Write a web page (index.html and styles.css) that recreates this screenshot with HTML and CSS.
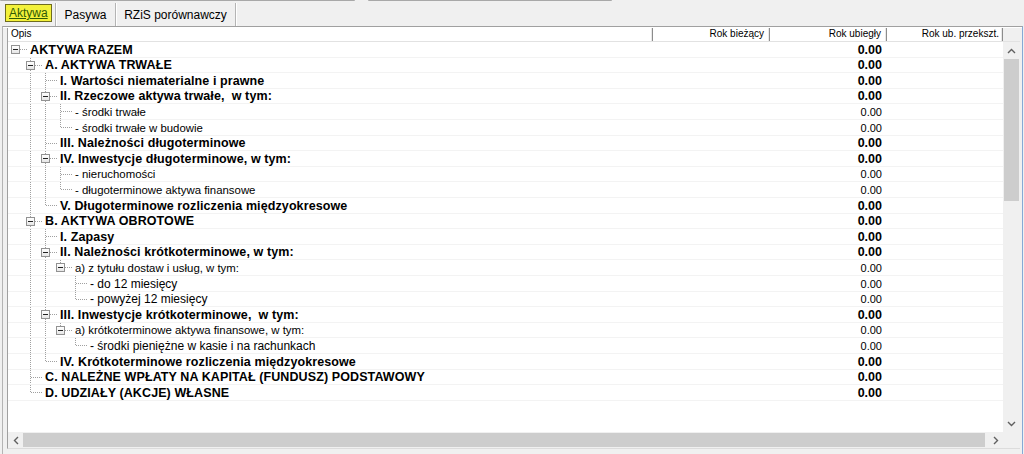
FILE: index.html
```html
<!DOCTYPE html>
<html lang="pl">
<head>
<meta charset="utf-8">
<title>Bilans</title>
<link rel="stylesheet" href="styles.css">
</head>
<body>
<div class="topline"><span class="seg s1"></span><span class="seg s2"></span></div>
<div class="tabs">
  <div class="tab tab1"><span class="hl">Aktywa</span></div>
  <div class="tab tab2">Pasywa</div>
  <div class="tab tab3">RZiS porównawczy</div>
</div>
<div class="frame">
  <div class="grid">
    <div class="head">
      <div class="h h0">Opis</div>
      <div class="h h1">Rok bieżący</div>
      <div class="h h2">Rok ubiegły</div>
      <div class="h h3">Rok ub. przekszt.</div>
      <div class="hfill"></div>
    </div>
    <div class="body">
      <div class="rows">
        <div class="row b"><div class="tree"><i class="n r"><b class="bx"></b></i><span class="lbl">AKTYWA RAZEM</span></div><div class="c"></div><div class="c v">0.00</div><div class="c"></div></div>
        <div class="row b"><div class="tree"><i class="g"></i><i class="n t"><b class="bx"></b></i><span class="lbl">A. AKTYWA TRWAŁE</span></div><div class="c"></div><div class="c v">0.00</div><div class="c"></div></div>
        <div class="row b"><div class="tree"><i class="g"></i><i class="g p"></i><i class="n t"></i><span class="lbl">I. Wartości niematerialne i prawne</span></div><div class="c"></div><div class="c v">0.00</div><div class="c"></div></div>
        <div class="row b"><div class="tree"><i class="g"></i><i class="g p"></i><i class="n t"><b class="bx"></b></i><span class="lbl">II. Rzeczowe aktywa trwałe,  w tym:</span></div><div class="c"></div><div class="c v">0.00</div><div class="c"></div></div>
        <div class="row s"><div class="tree"><i class="g"></i><i class="g p"></i><i class="g p"></i><i class="n t"></i><span class="lbl">- środki trwałe</span></div><div class="c"></div><div class="c v">0.00</div><div class="c"></div></div>
        <div class="row s"><div class="tree"><i class="g"></i><i class="g p"></i><i class="g p"></i><i class="n l"></i><span class="lbl">- środki trwałe w budowie</span></div><div class="c"></div><div class="c v">0.00</div><div class="c"></div></div>
        <div class="row b"><div class="tree"><i class="g"></i><i class="g p"></i><i class="n t"></i><span class="lbl">III. Należności długoterminowe</span></div><div class="c"></div><div class="c v">0.00</div><div class="c"></div></div>
        <div class="row b"><div class="tree"><i class="g"></i><i class="g p"></i><i class="n t"><b class="bx"></b></i><span class="lbl">IV. Inwestycje długoterminowe, w tym:</span></div><div class="c"></div><div class="c v">0.00</div><div class="c"></div></div>
        <div class="row s"><div class="tree"><i class="g"></i><i class="g p"></i><i class="g p"></i><i class="n t"></i><span class="lbl">- nieruchomości</span></div><div class="c"></div><div class="c v">0.00</div><div class="c"></div></div>
        <div class="row s"><div class="tree"><i class="g"></i><i class="g p"></i><i class="g p"></i><i class="n l"></i><span class="lbl">- długoterminowe aktywa finansowe</span></div><div class="c"></div><div class="c v">0.00</div><div class="c"></div></div>
        <div class="row b"><div class="tree"><i class="g"></i><i class="g p"></i><i class="n l"></i><span class="lbl">V. Długoterminowe rozliczenia międzyokresowe</span></div><div class="c"></div><div class="c v">0.00</div><div class="c"></div></div>
        <div class="row b"><div class="tree"><i class="g"></i><i class="n t"><b class="bx"></b></i><span class="lbl">B. AKTYWA OBROTOWE</span></div><div class="c"></div><div class="c v">0.00</div><div class="c"></div></div>
        <div class="row b"><div class="tree"><i class="g"></i><i class="g p"></i><i class="n t"></i><span class="lbl">I. Zapasy</span></div><div class="c"></div><div class="c v">0.00</div><div class="c"></div></div>
        <div class="row b"><div class="tree"><i class="g"></i><i class="g p"></i><i class="n t"><b class="bx"></b></i><span class="lbl">II. Należności krótkoterminowe, w tym:</span></div><div class="c"></div><div class="c v">0.00</div><div class="c"></div></div>
        <div class="row s"><div class="tree"><i class="g"></i><i class="g p"></i><i class="g p"></i><i class="n l"><b class="bx"></b></i><span class="lbl">a) z tytułu dostaw i usług, w tym:</span></div><div class="c"></div><div class="c v">0.00</div><div class="c"></div></div>
        <div class="row m"><div class="tree"><i class="g"></i><i class="g p"></i><i class="g p"></i><i class="g"></i><i class="n t"></i><span class="lbl">- do 12 miesięcy</span></div><div class="c"></div><div class="c v">0.00</div><div class="c"></div></div>
        <div class="row m"><div class="tree"><i class="g"></i><i class="g p"></i><i class="g p"></i><i class="g"></i><i class="n l"></i><span class="lbl">- powyżej 12 miesięcy</span></div><div class="c"></div><div class="c v">0.00</div><div class="c"></div></div>
        <div class="row b"><div class="tree"><i class="g"></i><i class="g p"></i><i class="n t"><b class="bx"></b></i><span class="lbl">III. Inwestycje krótkoterminowe,  w tym:</span></div><div class="c"></div><div class="c v">0.00</div><div class="c"></div></div>
        <div class="row s"><div class="tree"><i class="g"></i><i class="g p"></i><i class="g p"></i><i class="n l"><b class="bx"></b></i><span class="lbl">a) krótkoterminowe aktywa finansowe, w tym:</span></div><div class="c"></div><div class="c v">0.00</div><div class="c"></div></div>
        <div class="row m"><div class="tree"><i class="g"></i><i class="g p"></i><i class="g p"></i><i class="g"></i><i class="n l"></i><span class="lbl">- środki pieniężne w kasie i na rachunkach</span></div><div class="c"></div><div class="c v">0.00</div><div class="c"></div></div>
        <div class="row b"><div class="tree"><i class="g"></i><i class="g p"></i><i class="n l"></i><span class="lbl">IV. Krótkoterminowe rozliczenia międzyokresowe</span></div><div class="c"></div><div class="c v">0.00</div><div class="c"></div></div>
        <div class="row b"><div class="tree"><i class="g"></i><i class="n t"></i><span class="lbl">C. NALEŻNE WPŁATY NA KAPITAŁ (FUNDUSZ) PODSTAWOWY</span></div><div class="c"></div><div class="c v">0.00</div><div class="c"></div></div>
        <div class="row b"><div class="tree"><i class="g"></i><i class="n l"></i><span class="lbl">D. UDZIAŁY (AKCJE) WŁASNE</span></div><div class="c"></div><div class="c v">0.00</div><div class="c"></div></div>
      </div>
      <div class="vscroll">
        <div class="sbtn"><svg width="9" height="6" viewBox="0 0 9 6"><polyline points="1,5 4.5,1.5 8,5" fill="none" stroke="#606060" stroke-width="1.4"/></svg></div>
        <div class="vtrack"><div class="vthumb"></div></div>
        <div class="sbtn"><svg width="9" height="6" viewBox="0 0 9 6"><polyline points="1,1 4.5,4.5 8,1" fill="none" stroke="#606060" stroke-width="1.4"/></svg></div>
      </div>
    </div>
    <div class="hbar">
      <div class="hscroll">
        <div class="hbtn"><svg width="6" height="9" viewBox="0 0 6 9"><polyline points="5,1 1.5,4.5 5,8" fill="none" stroke="#606060" stroke-width="1.4"/></svg></div>
        <div class="htrack"><div class="hthumb"></div></div>
        <div class="hbtn"><svg width="6" height="9" viewBox="0 0 6 9"><polyline points="1,1 4.5,4.5 1,8" fill="none" stroke="#606060" stroke-width="1.4"/></svg></div>
      </div>
      <div class="corner"></div>
    </div>
  </div>
</div>
</body>
</html>
```
FILE: styles.css
```css
html, body { margin: 0; padding: 0; }
body {
  width: 1024px;
  height: 454px;
  overflow: hidden;
  background: #f0f0f0;
  font-family: "Liberation Sans", Arial, sans-serif;
  color: #000;
  --vdot: repeating-linear-gradient(to bottom, #a0a0a0 0 1px, transparent 1px 2px);
  --hdot: repeating-linear-gradient(to right, #a0a0a0 0 1px, transparent 1px 2px);
}

/* remnants of controls above */
.topline { height: 2px; display: flex; }
.seg { height: 1px; background: #a8a8a8; border-radius: 0 0 1px 1px; }
.s1 { width: 355px; }
.s2 { width: 244px; margin-left: 13px; }

/* tabs */
.tabs { height: 24px; display: flex; padding-left: 2px; }
.tab {
  display: flex; align-items: flex-start; justify-content: center;
  font-size: 12px; line-height: 14px; box-sizing: border-box;
  padding-top: 5px;
  border-right: 1px solid #b4b4b4;
  box-shadow: 1px 0 0 #fff;
  margin: 1px 0 0;
}
.tab1 { width: 54px; justify-content: flex-start; padding-left: 3px; padding-top: 1px; }
.tab2 { width: 60px; }
.tab3 { width: 120px; }
.hl {
  display: block; height: 18px; line-height: 17px; box-sizing: border-box;
  padding: 0 3px; background: #f3f13a; border: 1px solid #6f6c1e;
  color: #2e5a06; text-decoration: underline; text-underline-offset: 1px;
}

/* frame + grid */
.frame {
  margin-left: 2px;
  border-left: 1px solid #b4b4b4;
  border-top: 1px solid #a0a0a0;
  border-right: 1px solid #86a9d6;
  padding: 1px 2px 0 4px;
  width: 1013px;
  height: 427px;
  box-shadow: inset 0 1px 0 #fff;
}
.grid {
  width: 1013px;
  box-sizing: border-box;
  border-left: 1px solid #a0a0a0;
  border-bottom: 1px solid #dcdcdc;
  background: #fff;
}
.head { display: flex; height: 13px; background: #fff; border-bottom: 1px solid #e2e2e2; }
.h {
  box-sizing: border-box; height: 13px;
  font-size: 10px; line-height: 12px;
  border-right: 1px solid #8c8c8c;
  box-shadow: inset -1px 0 0 #e8e8e8;
  text-align: right; padding-right: 5px; white-space: nowrap;
}
.h0 { width: 645px; text-align: left; padding-left: 3px; }
.h1, .h2 { width: 117px; }
.h3 { width: 116px; padding-right: 3px; }
.hfill { flex: 1; background: #f0f0f0; }

.body { display: flex; height: 390px; }
.rows { width: 995px; height: 390px; overflow: hidden; background: #fff; }
.row {
  display: grid;
  grid-template-columns: 645px 117px 117px 116px;
  height: 16px;
  box-sizing: border-box;
  border-bottom: 1px solid #f3f3f3;
}
.row:nth-child(5n+2), .row:nth-child(5n+4) { height: 15px; }
.tree { display: flex; align-items: stretch; overflow: hidden; }
.lbl { white-space: pre; align-self: center; }
.c { display: flex; align-items: center; justify-content: flex-end; padding-right: 5px; }
.b { font-weight: bold; font-size: 12.5px; }
.s { font-size: 11.4px; }
.s .c { font-size: 11px; }
.m { font-size: 12px; }
.m .c { font-size: 11px; }
.b .lbl { letter-spacing: 0.1px; }

/* tree guides */
.g, .n { display: block; flex: none; width: 15px; background-repeat: no-repeat; font-style: normal; }
.n { width: 22px; }
.p { background-image: var(--vdot); background-size: 1px 100%; background-position: 7px 0; }
.t { background-image: var(--vdot), var(--hdot); background-size: 1px 100%, 12px 1px; background-position: 7px 0, 8px 7px; }
.l { background-image: var(--vdot), var(--hdot); background-size: 1px 8px, 12px 1px; background-position: 7px 0, 8px 7px; }
.r { background-image: var(--hdot); background-size: 12px 1px; background-position: 8px 7px; }
.bx {
  display: block; width: 9px; height: 9px; box-sizing: border-box;
  margin: 3px 0 0 3px;
  border: 1px solid #929292;
  background: linear-gradient(#222, #222) center / 5px 1px no-repeat, linear-gradient(#fff, #e6e6e6);
}

/* scrollbars */
.vscroll { width: 17px; display: flex; flex-direction: column; background: #f0f0f0; }
.sbtn { height: 17px; display: flex; align-items: center; justify-content: center; flex: none; }
.vtrack { flex: 1; padding: 0 1px; }
.vthumb { height: 142px; background: #cdcdcd; }
.hbar { display: flex; height: 16px; }
.hscroll { width: 995px; display: flex; background: #f0f0f0; }
.hbtn { width: 15px; display: flex; align-items: center; justify-content: center; flex: none; }
.htrack { flex: 1; padding: 1px 0; }
.hthumb { width: 962px; height: 14px; background: #cdcdcd; }
.corner { flex: 1; background: #f0f0f0; }
```
